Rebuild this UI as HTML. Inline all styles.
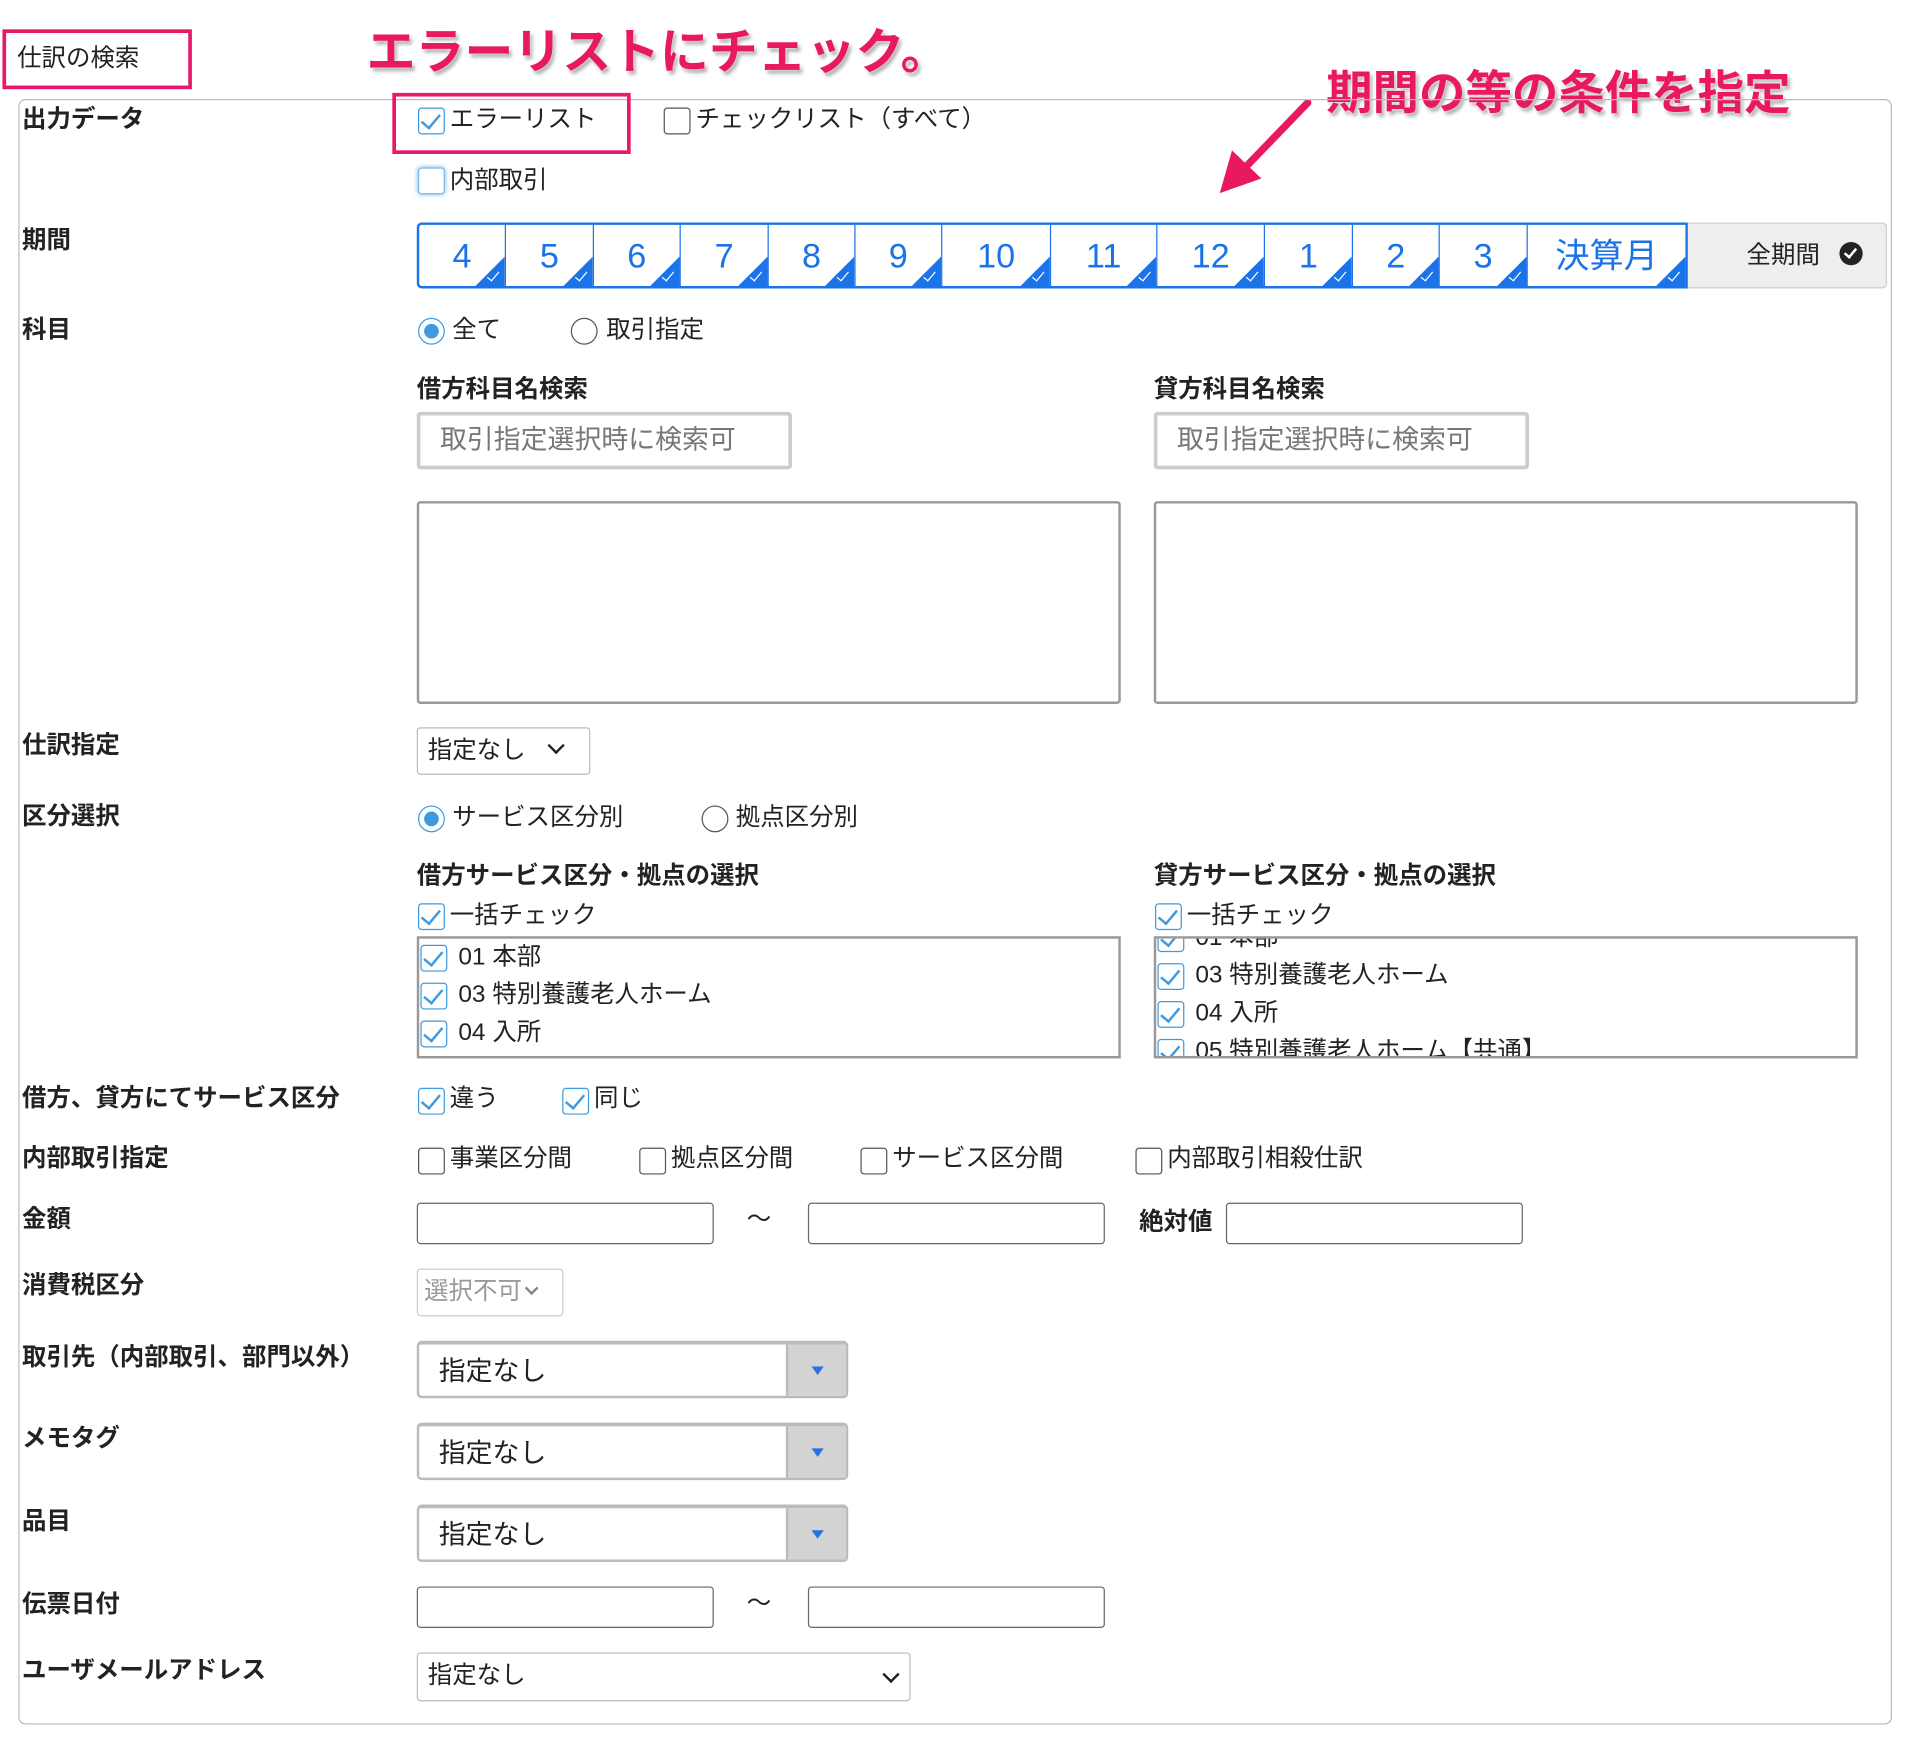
<!DOCTYPE html>
<html><head><meta charset="utf-8"><style>
html,body{margin:0;padding:0;background:#fff;overflow:hidden}
body{width:1914px;height:1738px}
#w{position:absolute;left:0;top:0;width:1566px;height:1422px;transform:scale(1.22222);transform-origin:0 0;font-family:"Liberation Sans","Noto Sans CJK JP",sans-serif;color:#222}
.a{position:absolute;white-space:nowrap}
.lb{position:absolute;left:18px;font-weight:bold;font-size:20px;line-height:24px}
.t{position:absolute;font-size:20px;line-height:24px;white-space:nowrap}
.cb{position:absolute;width:20px;height:20px;border:1.5px solid #555;border-radius:3px;background:#fff}
.cb.on{border-color:#3d9ae0}
.cb.on::after{content:"";position:absolute;left:5px;top:1px;width:7px;height:13px;border:solid #3d9ae0;border-width:0 2.5px 2.5px 0;transform:rotate(40deg)}
.rd{position:absolute;width:20px;height:20px;border:1.5px solid #555;border-radius:50%;background:#fff}
.rd.on{border-color:#3d9ae0}
.rd.on::after{content:"";position:absolute;left:4px;top:4px;width:12px;height:12px;border-radius:50%;background:#3d9ae0}
.inp{position:absolute;border:1.5px solid #666;border-radius:3px;background:#fff;box-sizing:border-box}
.cell{position:absolute;top:0;height:50px;border-right:1.5px solid #1a73e8;color:#1a73e8;font-size:28px;line-height:52px;text-align:center;overflow:hidden;box-sizing:border-box}
.cell::after{content:"";position:absolute;right:0;bottom:0;border-style:solid;border-width:0 0 24px 24px;border-color:transparent transparent #1a73e8 transparent}
.cell::before{content:"";position:absolute;right:7px;bottom:4px;width:4px;height:9px;border:solid #fff;border-width:0 1.5px 1.5px 0;transform:rotate(40deg);z-index:2}
.s2{position:absolute;left:341px;width:353px;height:47px;border:2px solid #bbb;border-top-width:3px;border-radius:4px;box-sizing:border-box;background:#fff}
.s2 .r{position:absolute;right:0;top:0;bottom:0;width:47px;background:#d3d3d3;border-left:2px solid #bbb}
.s2 .r::after{content:"";position:absolute;left:19px;top:18px;border-style:solid;border-width:7px 5px 0 5px;border-color:#2a6fe8 transparent transparent transparent}
.s2 .x{position:absolute;left:16px;top:7px;font-size:22px;line-height:30px}
.lst{position:absolute;top:766px;width:576px;height:100px;border:2px solid #999;box-sizing:border-box;overflow:hidden}
.chev{display:inline-block;width:8px;height:8px;border:solid #222;border-width:0 2.5px 2.5px 0;transform:rotate(45deg)}
</style></head><body><div id="w">

<div class="a" style="left:2px;top:24px;width:149px;height:43px;border:3px solid #e8196a"></div>
<div class="t" style="left:14px;top:36px;font-size:20px">仕訳の検索</div>
<div class="a" style="left:300px;top:10px;font-size:40px;font-weight:bold;color:#e8195f;text-shadow:0 0 3px #fff,2px 3px 3px rgba(0,0,0,.35)">エラーリストにチェック。</div>
<div class="a" style="left:1085px;top:45px;font-size:38px;font-weight:bold;color:#e8195f;text-shadow:0 0 3px #fff,2px 3px 3px rgba(0,0,0,.35)">期間の等の条件を指定</div>
<svg class="a" style="left:990px;top:78px" width="90" height="85"><line x1="80" y1="6" x2="25" y2="63" stroke="#e8195f" stroke-width="6" stroke-linecap="round"/><polygon points="8,80 18,45 42,68" fill="#e8195f"/></svg>

<div class="a" style="left:15px;top:81px;width:1531px;height:1328px;border:1.5px solid #bbb;border-radius:6px"></div>

<div class="lb" style="top:86px">出力データ</div>
<div class="lb" style="top:185px">期間</div>
<div class="lb" style="top:258px">科目</div>
<div class="lb" style="top:598px">仕訳指定</div>
<div class="lb" style="top:656px">区分選択</div>
<div class="lb" style="top:887px">借方、貸方にてサービス区分</div>
<div class="lb" style="top:936px">内部取引指定</div>
<div class="lb" style="top:986px">金額</div>
<div class="lb" style="top:1040px">消費税区分</div>
<div class="lb" style="top:1099px">取引先（内部取引、部門以外）</div>
<div class="lb" style="top:1165px">メモタグ</div>
<div class="lb" style="top:1233px">品目</div>
<div class="lb" style="top:1301px">伝票日付</div>
<div class="lb" style="top:1355px">ユーザメールアドレス</div>

<div class="a" style="left:321px;top:76px;width:189px;height:44px;border:3px solid #e8196a"></div>
<div class="cb on" style="left:342px;top:88px"></div><div class="t" style="left:368px;top:86px">エラーリスト</div>
<div class="cb" style="left:543px;top:88px"></div><div class="t" style="left:569px;top:86px">チェックリスト（すべて）</div>
<div class="cb" style="left:342px;top:137px;border-color:#7ab8ea;box-shadow:0 0 4px #7ab8ea"></div><div class="t" style="left:368px;top:136px">内部取引</div>

<div class="a" style="left:341px;top:182px;width:1040px;height:54px;border:2px solid #1a73e8;border-radius:4px 0 0 4px;box-sizing:border-box">
<div class="cell" style="left:0;width:71px">4</div>
<div class="cell" style="left:71px;width:72px">5</div>
<div class="cell" style="left:143px;width:71px">6</div>
<div class="cell" style="left:214px;width:72px">7</div>
<div class="cell" style="left:286px;width:71px">8</div>
<div class="cell" style="left:357px;width:71px">9</div>
<div class="cell" style="left:428px;width:89px">10</div>
<div class="cell" style="left:517px;width:87px">11</div>
<div class="cell" style="left:604px;width:88px">12</div>
<div class="cell" style="left:692px;width:72px">1</div>
<div class="cell" style="left:764px;width:71px">2</div>
<div class="cell" style="left:835px;width:72px">3</div>
<div class="cell" style="left:907px;width:129px;border-right:none">決算月</div>
</div>
<div class="a" style="left:1381px;top:182px;width:163px;height:54px;background:#eee;border:1.5px solid #ccc;border-left:none;border-radius:0 4px 4px 0;box-sizing:border-box;font-size:20px;line-height:52px;padding-left:48px">全期間 <span style="display:inline-block;width:19px;height:19px;border-radius:50%;background:#222;vertical-align:-2px;margin-left:10px;position:relative"><span style="position:absolute;left:6px;top:3px;width:4px;height:8px;border:solid #fff;border-width:0 2.5px 2.5px 0;transform:rotate(40deg)"></span></span></div>

<div class="rd on" style="left:342px;top:260px"></div><div class="t" style="left:370px;top:258px">全て</div>
<div class="rd" style="left:467px;top:260px"></div><div class="t" style="left:496px;top:258px">取引指定</div>

<div class="t" style="left:341px;top:307px;font-weight:bold">借方科目名検索</div>
<div class="t" style="left:944px;top:307px;font-weight:bold">貸方科目名検索</div>
<div class="inp" style="left:341px;top:337px;width:307px;height:47px;border:3px solid #ccc;color:#777;font-size:22px;line-height:40px;padding-left:16px">取引指定選択時に検索可</div>
<div class="inp" style="left:944px;top:337px;width:307px;height:47px;border:3px solid #ccc;color:#777;font-size:22px;line-height:40px;padding-left:16px">取引指定選択時に検索可</div>
<div class="inp" style="left:341px;top:410px;width:576px;height:166px;border:2px solid #999"></div>
<div class="inp" style="left:944px;top:410px;width:576px;height:166px;border:2px solid #999"></div>

<div class="inp" style="left:341px;top:595px;width:142px;height:39px;border:1.5px solid #bbb;font-size:20px;line-height:36px;padding-left:8px">指定なし <span class="chev" style="margin-left:14px;position:relative;top:-5px"></span></div>

<div class="rd on" style="left:342px;top:659px"></div><div class="t" style="left:370px;top:657px">サービス区分別</div>
<div class="rd" style="left:574px;top:659px"></div><div class="t" style="left:602px;top:657px">拠点区分別</div>

<div class="t" style="left:341px;top:705px;font-weight:bold">借方サービス区分・拠点の選択</div>
<div class="t" style="left:944px;top:705px;font-weight:bold">貸方サービス区分・拠点の選択</div>
<div class="cb on" style="left:342px;top:739px"></div><div class="t" style="left:368px;top:737px">一括チェック</div>
<div class="cb on" style="left:945px;top:739px"></div><div class="t" style="left:971px;top:737px">一括チェック</div>

<div class="lst" style="left:341px">
<div class="cb on" style="left:1px;top:5px"></div><div class="t" style="left:32px;top:3px">01 本部</div>
<div class="cb on" style="left:1px;top:36px"></div><div class="t" style="left:32px;top:34px">03 特別養護老人ホーム</div>
<div class="cb on" style="left:1px;top:67px"></div><div class="t" style="left:32px;top:65px">04 入所</div>
<div class="cb on" style="left:1px;top:98px"></div>
</div>
<div class="lst" style="left:944px">
<div class="cb on" style="left:1px;top:-11px"></div><div class="t" style="left:32px;top:-13px">01 本部</div>
<div class="cb on" style="left:1px;top:20px"></div><div class="t" style="left:32px;top:18px">03 特別養護老人ホーム</div>
<div class="cb on" style="left:1px;top:51px"></div><div class="t" style="left:32px;top:49px">04 入所</div>
<div class="cb on" style="left:1px;top:82px"></div><div class="t" style="left:32px;top:80px">05 特別養護老人ホーム【共通】</div>
</div>

<div class="cb on" style="left:342px;top:890px"></div><div class="t" style="left:368px;top:887px">違う</div>
<div class="cb on" style="left:460px;top:890px"></div><div class="t" style="left:486px;top:887px">同じ</div>

<div class="cb" style="left:342px;top:939px"></div><div class="t" style="left:368px;top:936px">事業区分間</div>
<div class="cb" style="left:523px;top:939px"></div><div class="t" style="left:549px;top:936px">拠点区分間</div>
<div class="cb" style="left:704px;top:939px"></div><div class="t" style="left:730px;top:936px">サービス区分間</div>
<div class="cb" style="left:929px;top:939px"></div><div class="t" style="left:955px;top:936px">内部取引相殺仕訳</div>

<div class="inp" style="left:341px;top:984px;width:243px;height:34px"></div>
<div class="t" style="left:611px;top:986px">～</div>
<div class="inp" style="left:661px;top:984px;width:243px;height:34px"></div>
<div class="t" style="left:932px;top:988px;font-weight:bold">絶対値</div>
<div class="inp" style="left:1003px;top:984px;width:243px;height:34px"></div>

<div class="inp" style="left:341px;top:1038px;width:120px;height:39px;border:1.5px solid #ccc;color:#999;font-size:20px;line-height:36px;padding-left:5px">選択不可 <span class="chev" style="border-color:#888;width:6px;height:6px;position:relative;top:-5px;margin-left:-2px"></span></div>

<div class="s2" style="top:1097px"><div class="x">指定なし</div><div class="r"></div></div>
<div class="s2" style="top:1164px"><div class="x">指定なし</div><div class="r"></div></div>
<div class="s2" style="top:1231px"><div class="x">指定なし</div><div class="r"></div></div>

<div class="inp" style="left:341px;top:1298px;width:243px;height:34px"></div>
<div class="t" style="left:611px;top:1300px">～</div>
<div class="inp" style="left:661px;top:1298px;width:243px;height:34px"></div>

<div class="inp" style="left:341px;top:1352px;width:404px;height:40px;border:1.5px solid #bbb;font-size:20px;line-height:37px;padding-left:8px">指定なし<span class="chev" style="position:absolute;right:10px;top:12px"></span></div>

</div></body></html>
